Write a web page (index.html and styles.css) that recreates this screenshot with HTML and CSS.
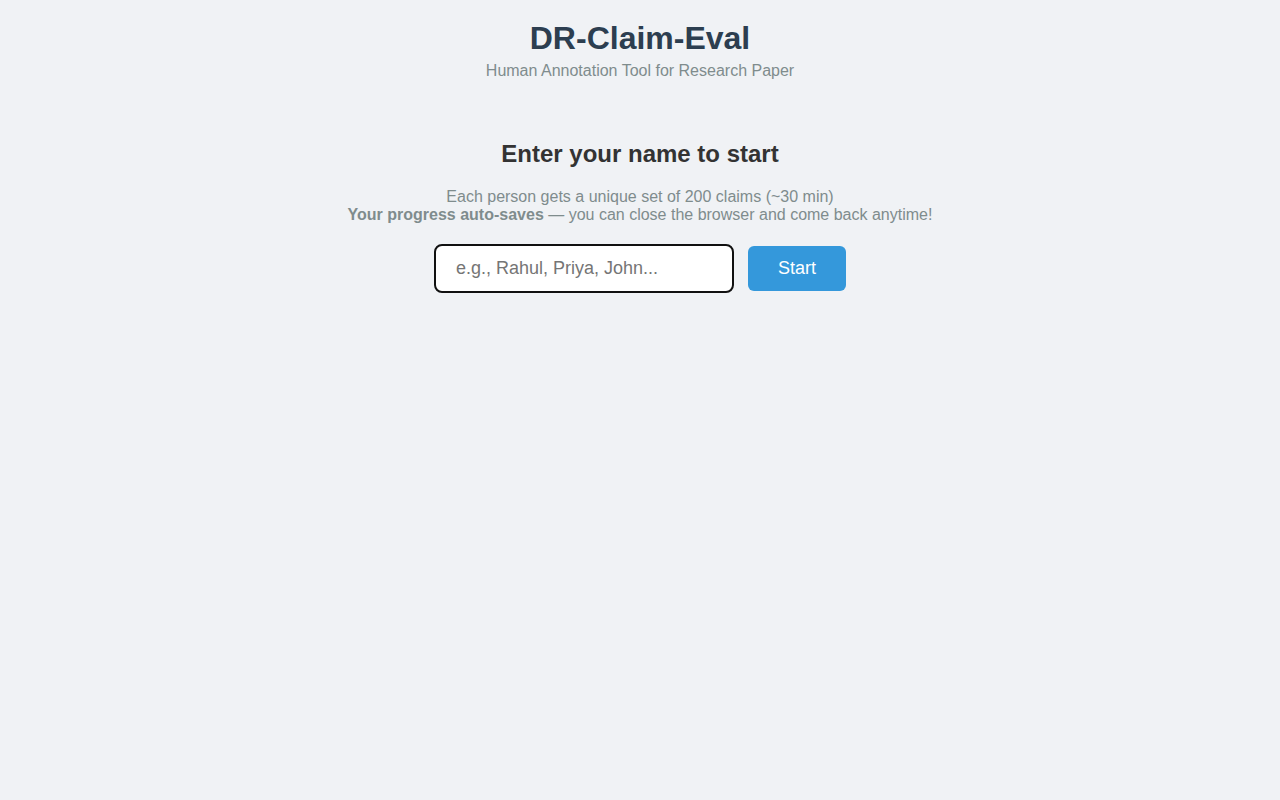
FILE: index.html
```html
<!DOCTYPE html>
<html lang="en">
<head>
<meta charset="utf-8">
<title>DR-Claim-Eval</title>
<link rel="stylesheet" href="styles.css">
</head>
<body>
<header class="header">
  <h1 class="title">DR-Claim-Eval</h1>
  <p class="subtitle">Human Annotation Tool for Research Paper</p>
</header>
<main class="start">
  <h2 class="start-heading">Enter your name to start</h2>
  <p class="start-info">Each person gets a unique set of 200 claims (~30 min)<br><strong>Your progress auto-saves</strong> — you can close the browser and come back anytime!</p>
  <div class="start-row">
    <input class="name-input" type="text" placeholder="e.g., Rahul, Priya, John...">
    <button class="start-btn" type="button">Start</button>
  </div>
</main>
</body>
</html>
```
FILE: styles.css
```css
html, body {
  margin: 0;
  padding: 0;
  background: #f0f2f5;
  font-family: "Liberation Sans", Arial, sans-serif;
}
body {
  padding-top: 20px;
  text-align: center;
}
.title {
  margin: 0;
  font-size: 32px;
  line-height: 37px;
  font-weight: bold;
  color: #2c3e50;
}
.subtitle {
  margin: 5px 0 0;
  font-size: 16px;
  line-height: 18px;
  color: #7f8c8d;
}
.start {
  margin-top: 60px;
  display: flex;
  flex-direction: column;
  align-items: center;
}
.start-heading {
  margin: 0;
  font-size: 24px;
  line-height: 28px;
  font-weight: bold;
  color: #333333;
}
.start-info {
  margin: 20px 0 0;
  font-size: 16px;
  line-height: 18px;
  color: #7f8c8d;
}
.start-row {
  margin-top: 20px;
  display: flex;
  align-items: center;
  gap: 14px;
}
.name-input {
  box-sizing: border-box;
  width: 300px;
  height: 49px;
  padding: 12px 20px;
  border: 2px solid #111111;
  border-radius: 8px;
  background: #ffffff;
  font-family: "Liberation Sans", Arial, sans-serif;
  font-size: 18px;
  color: #333;
  outline: none;
}
.name-input::placeholder {
  color: #757575;
}
.start-btn {
  box-sizing: border-box;
  height: 45px;
  padding: 0 30px;
  border: none;
  border-radius: 6px;
  background: #3498db;
  color: #ffffff;
  font-family: "Liberation Sans", Arial, sans-serif;
  font-size: 18px;
  cursor: pointer;
}
```
